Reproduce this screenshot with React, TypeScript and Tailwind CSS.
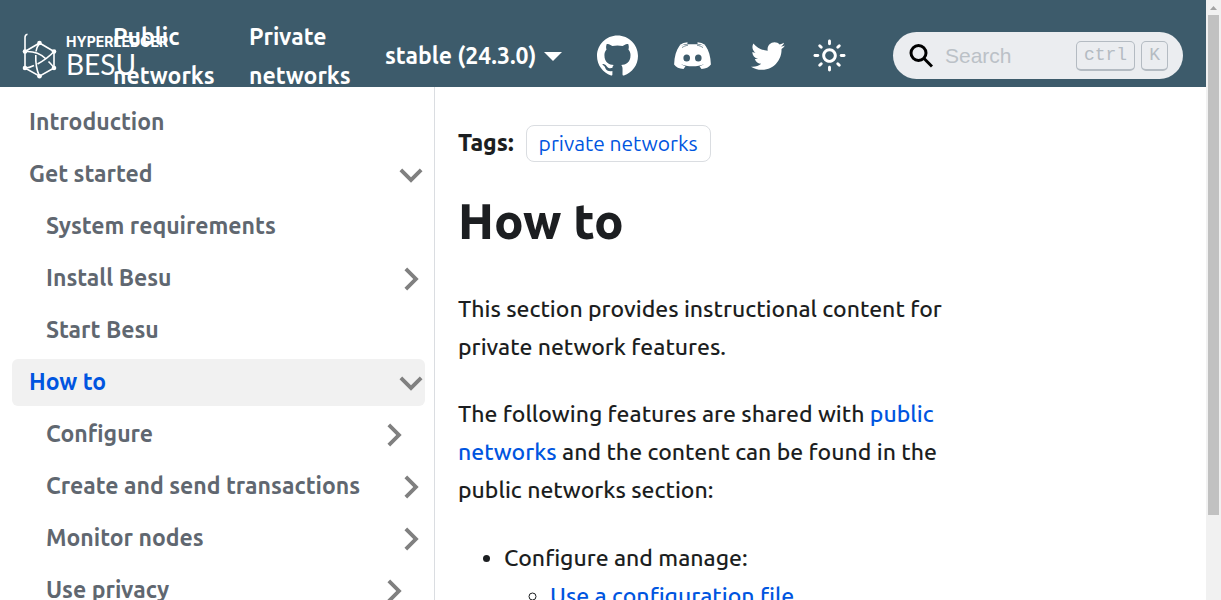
import React from "react";
import { SiGithub } from "react-icons/si";
import { FaTwitter } from "react-icons/fa";
import { MdOutlineLightMode } from "react-icons/md";

type Item = { label: string; nested?: boolean; active?: boolean; arrow?: "down" | "right"; inset?: boolean };

const items: Item[] = [
  { label: "Introduction" },
  { label: "Get started", arrow: "down" },
  { label: "System requirements", nested: true },
  { label: "Install Besu", nested: true, arrow: "right" },
  { label: "Start Besu", nested: true },
  { label: "How to", active: true, arrow: "down" },
  { label: "Configure", nested: true, arrow: "right", inset: true },
  { label: "Create and send transactions", nested: true, arrow: "right" },
  { label: "Monitor nodes", nested: true, arrow: "right" },
  { label: "Use privacy", nested: true, arrow: "right", inset: true },
];

function Chevron({ dir }: { dir: "down" | "right" }) {
  return (
    <svg viewBox="0 0 24 24" aria-hidden="true" className={dir === "down" ? "size-[46px] rotate-180 fill-[#808080]" : "size-[46px] rotate-90 fill-[#808080]"}>
      <path d="M7.41 15.41L12 10.83l4.59 4.58L18 14l-6-6-6 6z" />
    </svg>
  );
}

function DiscordIcon() {
  return (
    <svg viewBox="0 0 37 28" aria-hidden="true" className="h-7 w-[37px]">
      <path
        fill="#fff"
        fillRule="evenodd"
        d="M5.500 3.800C8.500 2.800 13 2.200 18.500 2.200s10 .6 13 1.600C34.800 8.500 36.600 14.500 36.900 22.500c-1.800 2.800-5.100 4.300-9.400 4.500l-2-2.800c1.800-.5 3.300-1.200 4.700-2.200-3.300 1.600-7.200 2.300-11.700 2.300S10.100 23.600 6.800 22c1.400 1 2.900 1.700 4.700 2.200L9.500 27C5.200 26.800 1.900 25.300.1 22.500.4 14.500 2.200 8.500 5.500 3.800ZM12.700 12.400a3.300 3.500 0 1 0 0 7 3.300 3.500 0 0 0 0-7Zm11.600 0a3.300 3.500 0 1 0 0 7 3.300 3.500 0 0 0 0-7Z"
      />
      <path d="M6 3.600C8.600 1.900 10.500 1.200 13.500 1M31 3.600C28.400 1.900 26.500 1.200 23.500 1" fill="none" stroke="#fff" strokeWidth="1.300" />
      <path d="M8 5.600C9.700 4.400 11.500 3.700 14 3.200M29 5.600C27.300 4.400 25.500 3.700 23 3.200" fill="none" stroke="#3d5b6b" strokeWidth=".7" />
    </svg>
  );
}

function LogoMark() {
  return (
    <svg viewBox="0 0 36 46" aria-hidden="true" className="h-[46px] w-9 shrink-0" fill="none" stroke="#fff" strokeWidth="1.600">
      <path d="M6.500 1.200C4.500 1.400 4 2.600 4 4.600V35L18.500 43.200 33 35V18.500L18.500 10 4 18.500" />
      <path d="M4 18.500C13 18 20 21 24.500 25.500M27.500 28.500C30 31 32 33 33 35M33 18.500C27 25 22 28 16.500 31M13 32.500C10 34 7 35 4 35M18.500 10C16.500 13 15.300 16 15 18.500M14.800 22C14.500 29 15.500 37 18.500 43.200" />
      <g fill="#fff" stroke="none">
        <circle cx="4" cy="18.500" r="2.300" />
        <circle cx="33" cy="18.500" r="2.300" />
        <circle cx="4" cy="35" r="2.300" />
        <circle cx="33" cy="35" r="2.300" />
        <circle cx="18.500" cy="10" r="2.300" />
        <circle cx="18.500" cy="43.200" r="2.300" />
      </g>
    </svg>
  );
}

function Header() {
  return (
    <header className="flex h-[87px] shrink-0 items-center justify-between overflow-hidden bg-[#3d5b6b] pt-6 pr-[23px] pl-[21px] text-white">
      <div className="flex items-center">
        <a href="#home" className="flex w-[92px] items-center gap-[9px] whitespace-nowrap">
          <LogoMark />
          <span className="flex flex-col font-['Lato']">
            <span className="font-['Inter'] text-[14px] leading-4 font-bold">HYPERLEDGER</span>
            <span className="text-[28px] leading-7">BESU</span>
          </span>
        </a>
        <a href="#public" className="w-[136px] pr-6 text-[23px] leading-[39px] font-semibold">Public networks</a>
        <a href="#private" className="w-[136px] pr-6 text-[23px] leading-[39px] font-semibold">Private networks</a>
        <button type="button" className="flex items-center gap-2 pt-0.5 text-[23px] font-semibold whitespace-nowrap">
          stable (24.3.0)
          <svg viewBox="0 0 18 9" aria-hidden="true" className="h-[9px] w-[18px] fill-white"><path d="M0 0h18L9 9z" /></svg>
        </button>
      </div>
      <div className="flex items-center">
        <a href="#github" aria-label="GitHub"><SiGithub className="size-[41px]" /></a>
        <a href="#discord" aria-label="Discord" className="ml-9"><DiscordIcon /></a>
        <a href="#twitter" aria-label="Twitter" className="ml-10"><FaTwitter className="size-[34px]" /></a>
        <button type="button" aria-label="Switch theme" className="ml-[27px]"><MdOutlineLightMode className="size-[35px]" /></button>
        <label className="ml-[46px] flex h-[47px] w-[290px] items-center rounded-full bg-[#ebedf0] pr-[15px] pl-4">
          <svg viewBox="0 0 24 24" aria-hidden="true" className="size-6 shrink-0 fill-none stroke-black" strokeWidth="3"><circle cx="9.500" cy="9" r="7.500" /><path d="M14.800 14.300L23 22.500" /></svg>
          <input aria-label="Search" placeholder="Search" className="ml-3 w-0 min-w-0 flex-1 bg-transparent font-['Liberation_Sans'] text-[21px] outline-none placeholder:text-[#bbc1c7]" />
          <kbd className="flex h-[30px] items-center rounded-[5px] border border-b-2 border-[#b4bbc2] px-[7px] font-['Liberation_Mono'] text-[18px] text-[#b4bbc2]">ctrl</kbd>
          <kbd className="ml-1.5 flex h-[30px] items-center rounded-[5px] border border-b-2 border-[#b4bbc2] px-[7px] font-['Liberation_Mono'] text-[18px] text-[#b4bbc2]">K</kbd>
        </label>
      </div>
    </header>
  );
}

function Sidebar() {
  return (
    <nav aria-label="Docs" className="w-[435px] shrink-0 overflow-hidden border-r border-[#dadde1] pt-3 pr-[9px] pl-3">
      <ul className="flex flex-col gap-[5px]">
        {items.map((it) => (
          <li key={it.label} className={it.nested ? "pl-[17px]" : ""}>
            <div className={it.active ? "flex h-[47px] items-center justify-between rounded-md bg-[#f1f1f1] text-[#0055e0]" : "flex h-[47px] items-center justify-between text-[#606770]"}>
              <a href="#doc" className="pl-[17px] text-[23px] font-semibold whitespace-nowrap">{it.label}</a>
              {it.arrow && (
                <button type="button" aria-label={"Toggle " + it.label} className={it.inset ? "mr-2" : "-mr-[9px]"}>
                  <Chevron dir={it.arrow} />
                </button>
              )}
            </div>
          </li>
        ))}
      </ul>
    </nav>
  );
}

function Scrollbar() {
  return (
    <div aria-hidden="true" className="flex w-[15px] shrink-0 flex-col items-center bg-[#f1f1f1]">
      <svg viewBox="0 0 15 15" className="size-[15px] shrink-0 fill-[#a3a3a3]"><path d="M4 10L7.500 6 11 10z" /></svg>
      <div className="h-5/6 w-[11px] bg-[#c1c1c1]" />
    </div>
  );
}

export default function App() {
  return (
    <div className="flex h-screen overflow-hidden bg-white font-['Ubuntu','Noto_Sans',sans-serif] text-[#1c1e21]">
      <div className="flex min-w-0 flex-1 flex-col">
        <Header />
        <div className="flex min-h-0 flex-1">
          <Sidebar />
          <main className="min-w-0 flex-1 overflow-hidden px-[23px] pt-[37px]">
            <article className="max-w-[500px] text-[23px] leading-[38px] font-medium">
              <div className="flex items-center">
                <b className="font-extrabold">Tags:</b>
                <a href="#tag" className="ml-3 flex h-[37px] items-center rounded-lg border border-[#dadde1] px-3 text-[21px] font-[450] text-[#0055e0]">private networks</a>
              </div>
              <h1 className="mt-7 text-[49px] leading-[62px] font-extrabold">How to</h1>
              <p className="mt-[38px]">This section provides instructional content for private network features.</p>
              <p className="mt-[29px]">The following features are shared with <a href="#pub" className="text-[#0055e0]">public networks</a> and the content can be found in the public networks section:</p>
              <ul className="mt-[30px] list-disc pl-[46px]">
                <li>
                  Configure and manage:
                  <ul className="list-[circle] pl-[46px]">
                    <li><a href="#config" className="text-[#0055e0]">Use a configuration file</a></li>
                  </ul>
                </li>
              </ul>
            </article>
          </main>
        </div>
      </div>
      <Scrollbar />
    </div>
  );
}
